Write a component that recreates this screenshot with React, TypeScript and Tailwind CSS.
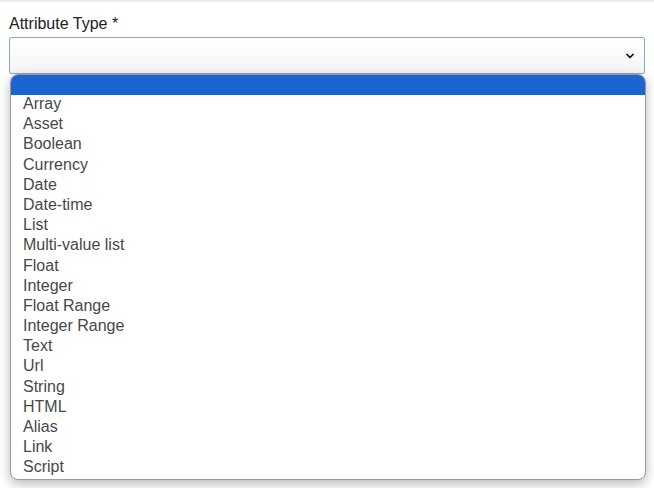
import React from 'react';
import { ChevronDown } from 'lucide-react';

const options = [
  'Array',
  'Asset',
  'Boolean',
  'Currency',
  'Date',
  'Date-time',
  'List',
  'Multi-value list',
  'Float',
  'Integer',
  'Float Range',
  'Integer Range',
  'Text',
  'Url',
  'String',
  'HTML',
  'Alias',
  'Link',
  'Script',
];

const App: React.FC = () => {
  return (
    <div
      className="relative h-[488px] w-[654px] overflow-hidden bg-white"
      style={{ fontFamily: '"Liberation Sans", Arial, sans-serif' }}
    >
      {/* top edge */}
      <div className="h-[3px] bg-gradient-to-b from-[#e4e4e4] to-white" />

      <div className="px-[9px] pt-[12px]">
        <label className="block text-[16px] leading-[18px] text-[#222]">Attribute Type *</label>

        {/* Select */}
        <div className="relative mt-[4px] h-[37px] rounded-[2px] border border-[#86abcb] bg-gradient-to-b from-white to-[#f5f5f5]">
          <ChevronDown
            className="absolute right-[8px] top-[12px] text-[#111]"
            size={12}
            strokeWidth={3.5}
          />
        </div>
      </div>

      {/* Dropdown list */}
      <div className="absolute left-[10px] top-[74px] w-[636px] rounded-[8px] border border-[#9a9a9a] bg-white shadow-[0_4px_12px_rgba(0,0,0,0.28)]">
        <div className="h-[20px] rounded-t-[7px] bg-[#1a65d1]" />
        <ul>
          {options.map((o) => (
            <li key={o} className="h-[20.2px] pl-[12px] text-[16px] leading-[18px] text-[#484848]">
              {o}
            </li>
          ))}
        </ul>
      </div>
    </div>
  );
};

export default App;
